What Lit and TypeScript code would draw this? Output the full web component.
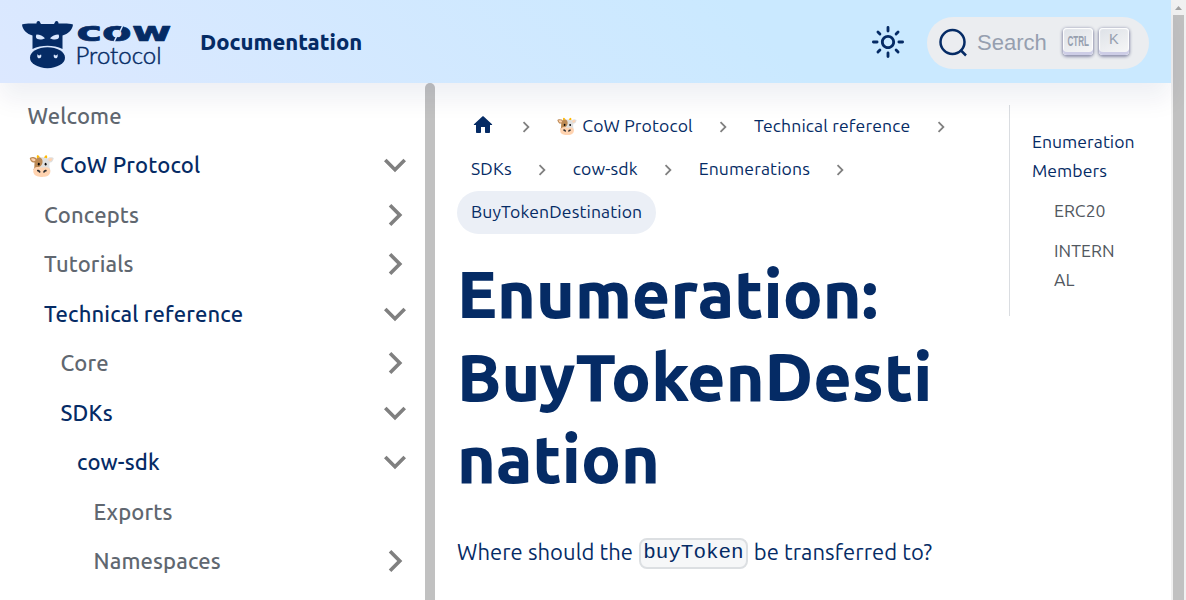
import { LitElement, html, css, svg, nothing } from "lit";
import { customElement } from "lit/decorators.js";

interface Item { label: string; level: number; state?: "open" | "closed"; active?: boolean; }

const items: Item[] = [
  { label: "Welcome", level: 0 },
  { label: "🐮 CoW Protocol", level: 0, state: "open", active: true },
  { label: "Concepts", level: 1, state: "closed" },
  { label: "Tutorials", level: 1, state: "closed" },
  { label: "Technical reference", level: 1, state: "open", active: true },
  { label: "Core", level: 2, state: "closed" },
  { label: "SDKs", level: 2, state: "open", active: true },
  { label: "cow-sdk", level: 3, state: "open", active: true },
  { label: "Exports", level: 4 },
  { label: "Namespaces", level: 4, state: "closed" },
];

const crumbs = ["🐮 CoW Protocol", "Technical reference", "SDKs", "cow-sdk", "Enumerations"];

const chevron = (cls: string) => svg`
  <svg class=${cls} viewBox="0 0 24 24"><path d="M8.6 16.6 13.2 12 8.6 7.4 10 6l6 6-6 6z" fill="#808080"/></svg>`;

@customElement("app-root")
export class AppRoot extends LitElement {
  static styles = css`
    :host {
      display: grid; grid-template-columns: 1171px 15px; height: 600px; overflow: hidden;
      background: #fff; color: #052b65;
      font-family: Ubuntu, "Noto Sans", "Open Sans", sans-serif; font-size: 22px; font-weight: 450;
    }
    * { box-sizing: border-box; }
    .page { display: grid; grid-template-rows: 83px 517px; min-width: 0; }
    .nav {
      display: flex; align-items: center; padding: 2px 22px 0; z-index: 1;
      background: linear-gradient(45deg, #dce8ff, #cae9ff 65%);
      box-shadow: 0 16px 24px rgba(10, 30, 90, 0.065);
    }
    .logo { width: 150px; height: 50px; flex: none; overflow: visible; margin-top: 6px; }
    .title { margin: -3px 0 0 28px; font-weight: 780; }
    .theme { width: 34px; height: 34px; margin: -2px 0 0 auto; }
    .search {
      display: flex; align-items: center; width: 222px; height: 52px; margin-left: 22px;
      padding: 0 19px 0 11px; border-radius: 26px; background: #ebedf0;
    }
    .lens { width: 30px; height: 30px; }
    .placeholder { margin: 0 auto 0 9px; font: 22px "Liberation Sans", sans-serif; color: #969faf; }
    .key {
      display: flex; justify-content: center; width: 30px; height: 27px; margin: -3px 1px 0 5px;
      border-radius: 4px; background: linear-gradient(-26.5deg, #f8f8f8, #dde1e7);
      box-shadow: inset 0 -3px 0 #cdcde6, inset 0 0 1px 1px #fff, 0 1px 3px 1px rgba(30, 35, 90, 0.45);
    }
    .key svg { width: 30px; height: 24px; flex: none; overflow: visible; }
    .body { display: grid; grid-template-columns: 425px 10px 552px 1fr; min-height: 0; }
    .side { display: flex; flex-direction: column; gap: 5.53px; padding: 11px 11px 0; font-weight: 560; letter-spacing: 0.14px; color: #606770; overflow: hidden; }
    .item { display: flex; align-items: center; flex: none; height: 44px; padding-left: 16.5px; white-space: nowrap; }
    .item span { margin-top: -1.5px; }
    .item.active { color: #052b65; }
    .item.l1 { padding-left: 33px; }
    .item.l2 { padding-left: 49.5px; }
    .item.l3 { padding-left: 66px; }
    .item.l4 { padding-left: 82.5px; }
    .arrow { width: 44px; height: 44px; margin: -1px -2.500px 0 auto; }
    .open .arrow { transform: rotate(90deg); }
    .track { background: #c1c1c1; border-radius: 5px 5px 0 0; }
    .main { padding: 22px 22px 0; }
    .crumbs { display: flex; flex-wrap: wrap; width: 512px; font-size: 17.6px; letter-spacing: 0.13px; white-space: nowrap; }
    .crumb { display: flex; align-items: center; height: 43px; }
    .pill { display: flex; align-items: center; height: 43px; padding: 0 14px 1.5px; border-radius: 22px; }
    .current { background: #ebeff6; }
    .home { width: 24px; height: 24px; margin-top: -2px; }
    .sep { width: 22px; height: 22px; margin: 1px 5.5px 0; }
    h1 { margin: 18px 0 34px; font-size: 66px; line-height: 82.5px; font-weight: 800; letter-spacing: 0.05px; }
    p { display: flex; align-items: center; margin: 0; height: 36px; white-space: nowrap; letter-spacing: 0.06px; }
    code {
      margin: 3px 6px 0; height: 31px; padding: 0 2.2px; border: 2px solid #dcdfe2; border-radius: 8px; letter-spacing: 0;
      background: #f6f7f8; font: 20.9px/26px "Liberation Mono", monospace;
    }
    .toc {
      align-self: start; height: 211px; margin: 22px 22px 0 22px; padding: 21.500px 0 0 22px;
      border-left: 1px solid #dadde1; font-size: 17.6px; letter-spacing: 0.05px; line-height: 29px;
    }
    .sub { padding-left: 22px; margin-top: 11px; color: #525860; }
    .rail { background: #f1f1f1; display: flex; flex-direction: column; align-items: center; gap: 4px; }
    .up { width: 15px; height: 11px; }
    .thumb { width: 11px; flex: 1; background: #c1c1c1; }
  `;

  private logo() {
    return svg`<svg class="logo" viewBox="0 0 150 50">
      <path fill="#052b65" d="M0 3.500C4 2 10 2.500 14.500 2.500C14.500 1 15 0 16.500 0c1.500 0 1.500 1.500 2.500 3h13c1-1.500 1-3 2.500-3 1.500 0 2 1 2 2.500 4.500 0 10.500-.5 14.500 1C50.500 9 46 13 40.500 14.500V28c-9-4.300-21-4.300-30 0V14.500C5 13 .5 9 0 3.500z"/>
      <ellipse cx="25.500" cy="36.700" rx="17.500" ry="10.500" fill="#052b65"/>
      <g fill="#d9e7ff">
        <path d="M14.500 13.500c3.500.2 6.500 1.500 8.500 3.700-2 1.200-5.500 1.600-7.500.8-1.800-.8-2-2.800-1-4.500zM36.500 13.500c-3.500.2-6.500 1.500-8.500 3.700 2 1.200 5.500 1.600 7.500.8 1.800-.8 2-2.800 1-4.500z"/>
        <path d="M16 32.700c-.3 1 .3 1.700 1.200 1.700.8 0 1.300-.5 1.800-1.100.9 2.200 0 4-1.700 4-2 0-2.700-2.800-1.300-4.600zM35 32.700c.3 1-.3 1.700-1.200 1.700-.8 0-1.300-.5-1.800-1.100-.9 2.200 0 4 1.700 4 2 0 2.700-2.800 1.300-4.600z"/>
      </g>
      <g fill="#052b65">
        <text x="54.500" y="20" font-family="DejaVu Sans" font-weight="700" font-size="27" textLength="95" lengthAdjust="spacingAndGlyphs" stroke="#052b65" stroke-width=".7" stroke-linejoin="round">cow</text>
        <text x="53.500" y="42.500" font-family="Lato" font-weight="300" font-size="22.500" textLength="86" lengthAdjust="spacingAndGlyphs" stroke="#052b65" stroke-width=".45">Protocol</text>
      </g>
      <path d="M101 4l-3 6.500M95 14.500l-3 6.500" stroke="#d7e7ff" stroke-width="1.500"/>
    </svg>`;
  }

  private item(i: Item) {
    return html`<div class="item l${i.level} ${i.active ? "active" : ""} ${i.state ?? ""}">
      <span>${i.label}</span>${i.state ? chevron("arrow") : nothing}
    </div>`;
  }

  render() {
    return html`
      <div class="page">
        <header class="nav">
          ${this.logo()}
          <span class="title">Documentation</span>
          <svg class="theme" viewBox="0 0 24 24" fill="#052b65"><path d="M12 9c1.650 0 3 1.350 3 3s-1.350 3-3 3-3-1.350-3-3 1.350-3 3-3m0-2c-2.760 0-5 2.240-5 5s2.240 5 5 5 5-2.240 5-5-2.240-5-5-5z"/><path d="M12 1.700v2.600M12 19.700v2.600M1.700 12h2.600M19.700 12h2.600M4.900 4.900l1.400 1.400M17.700 17.700l1.400 1.400M19.100 4.900l-1.400 1.400M6.300 17.700l-1.400 1.400" stroke="#052b65" stroke-width="2" stroke-linecap="round"/></svg>
          <div class="search">
            <svg class="lens" viewBox="0 0 30 30" fill="none" stroke="#052b65" stroke-width="2.500"><circle cx="14.500" cy="14" r="12"/><path d="M22.500 22l5.500 5.500"/></svg>
            <span class="placeholder">Search</span>
            <span class="key"><svg viewBox="0 0 30 24"><text x="4.500" y="17.500" font-family="Liberation Sans" font-weight="700" font-size="15" fill="#969faf" textLength="21.500" lengthAdjust="spacingAndGlyphs">CTRL</text></svg></span>
            <span class="key"><svg viewBox="0 0 30 24"><text x="10" y="16" font-family="Liberation Sans" font-size="14.500" fill="#969faf">K</text></svg></span>
          </div>
        </header>
        <div class="body">
          <nav class="side">${items.map((i) => this.item(i))}</nav>
          <div class="track"></div>
          <main class="main">
            <div class="crumbs">
              <div class="crumb"><span class="pill"><svg class="home" viewBox="0 0 24 24"><path d="M10 19v-5h4v5c0 .55.45 1 1 1h3c.55 0 1-.45 1-1v-7h1.700c.46 0 .68-.57.33-.87L12.670 3.600c-.38-.34-.96-.34-1.340 0l-8.360 7.530c-.34.3-.13.87.33.87H5v7c0 .55.45 1 1 1h3c.55 0 1-.45 1-1z" fill="#052b65"/></svg></span>${chevron("sep")}</div>
              ${crumbs.map((c) => html`<div class="crumb"><span class="pill">${c}</span>${chevron("sep")}</div>`)}
              <div class="crumb"><span class="pill current">BuyTokenDestination</span></div>
            </div>
            <h1>Enumeration:<br>BuyTokenDesti<br>nation</h1>
            <p><span>Where should the</span><code>buyToken</code><span>be transferred to?</span></p>
          </main>
          <aside class="toc">
            <div>Enumeration Members</div>
            <div class="sub">ERC20</div>
            <div class="sub">INTERN<br>AL</div>
          </aside>
        </div>
      </div>
      <div class="rail"><svg class="up" viewBox="0 0 15 11"><path d="M4 10l3.500-4 3.500 4z" fill="#a3a3a3"/></svg><div class="thumb"></div></div>
    `;
  }
}
